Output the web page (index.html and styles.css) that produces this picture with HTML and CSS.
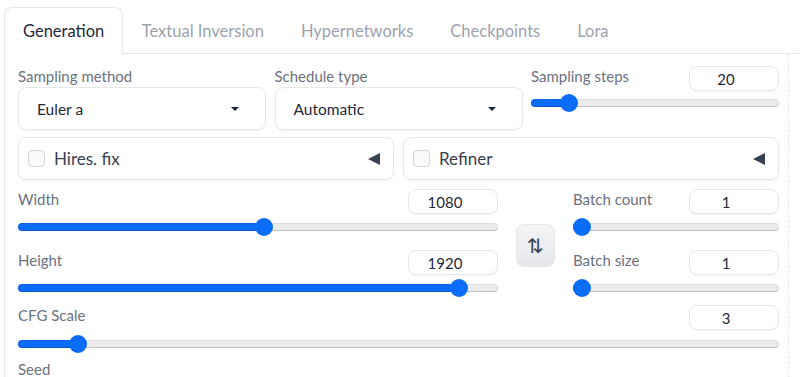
FILE: index.html
```html
<!DOCTYPE html>
<html>
<head>
<meta charset="utf-8">
<link rel="stylesheet" href="styles.css">
</head>
<body>
<div class="app">
  <div class="tabs">
    <button class="tab active">Generation</button>
    <button class="tab">Textual Inversion</button>
    <button class="tab">Hypernetworks</button>
    <button class="tab">Checkpoints</button>
    <button class="tab">Lora</button>
  </div>
  <div class="panel">
    <div class="content">
      <div class="row-top">
        <div class="field">
          <div class="lbl">Sampling method</div>
          <div class="select"><span class="select-val">Euler a</span><span class="caret"></span></div>
        </div>
        <div class="field">
          <div class="lbl">Schedule type</div>
          <div class="select"><span class="select-val">Automatic</span><span class="caret"></span></div>
        </div>
        <div class="slider-field steps">
          <div class="slider-head"><span class="lbl">Sampling steps</span><input class="num" type="text" value="20"></div>
          <input class="range" type="range" min="1" max="150" value="20" style="--f:0.1275">
        </div>
      </div>
      <div class="row-acc">
        <div class="accordion"><span class="cb"></span><span class="acc-title">Hires. fix</span><span class="tri"></span></div>
        <div class="accordion"><span class="cb"></span><span class="acc-title">Refiner</span><span class="tri"></span></div>
      </div>
      <div class="row-dims">
        <div class="col-left">
          <div class="slider-field">
            <div class="slider-head"><span class="lbl">Width</span><input class="num" type="text" value="1080"></div>
            <input class="range" type="range" min="64" max="2048" value="1080" style="--f:0.5121">
          </div>
          <div class="slider-field gap">
            <div class="slider-head"><span class="lbl">Height</span><input class="num" type="text" value="1920"></div>
            <input class="range" type="range" min="64" max="2048" value="1920" style="--f:0.9355">
          </div>
        </div>
        <button class="swap">⇅</button>
        <div class="col-right">
          <div class="slider-field">
            <div class="slider-head"><span class="lbl">Batch count</span><input class="num" type="text" value="1"></div>
            <input class="range" type="range" min="1" max="100" value="1" style="--f:0">
          </div>
          <div class="slider-field gap">
            <div class="slider-head"><span class="lbl">Batch size</span><input class="num" type="text" value="1"></div>
            <input class="range" type="range" min="1" max="8" value="1" style="--f:0">
          </div>
        </div>
      </div>
      <div class="slider-field cfg">
        <div class="slider-head"><span class="lbl">CFG Scale</span><input class="num" type="text" value="3"></div>
        <input class="range" type="range" min="1" max="30" value="3" style="--f:0.069">
      </div>
      <div class="lbl seed">Seed</div>
    </div>
    <div class="divider"></div>
  </div>
</div>
</body>
</html>
```

FILE: styles.css
```css
* { box-sizing: border-box; margin: 0; padding: 0; }
html, body { background: #ffffff; }
body {
  font-family: "Lato", "Noto Sans", sans-serif;
  color: #1f2937;
  width: 800px;
  height: 377px;
  overflow: hidden;
}
.app { padding: 7px 0 0 4px; }

.tabs {
  display: flex;
  height: 47px;
  border-bottom: 1px solid #e5e7eb;
}
.tab {
  font-family: inherit;
  font-size: 16.5px;
  color: #9ca3af;
  background: transparent;
  border: 1px solid transparent;
  border-bottom: none;
  padding: 0 17.5px;
  height: 46px;
  cursor: pointer;
}
.tab.active {
  color: #1f2937;
  background: #fff;
  border-color: #e5e7eb;
  border-radius: 8px 8px 0 0;
  height: 47px;
  padding: 0 18px;
  border-bottom: 1px solid #fff;
}

.panel {
  display: flex;
  border-left: 1px solid #e5e7eb;
  height: 330px;
  padding: 12px 0 0 13px;
}
.content { width: 761px; flex: 0 0 761px; }
.divider {
  margin-left: 9px;
  margin-top: -12px;
  border-left: 1px dashed #e5e7eb;
}

.lbl {
  font-size: 15px;
  color: #6b7280;
  line-height: 20px;
}

.row-top {
  display: grid;
  grid-template-columns: 248px 248px 248px;
  column-gap: 8.5px;
  height: 64px;
}
.field .lbl { margin-bottom: 1px; }
.select {
  height: 43px;
  border: 1px solid #e5e7eb;
  border-radius: 8px;
  box-shadow: 0 1px 2px rgba(0, 0, 0, 0.05);
  display: flex;
  align-items: center;
  justify-content: space-between;
  padding: 0 26px 0 18px;
}
.select-val { font-size: 15.5px; color: #1f2937; }
.caret {
  width: 0;
  height: 0;
  border-left: 4px solid transparent;
  border-right: 4px solid transparent;
  border-top: 4.5px solid #1f2937;
}

.slider-head {
  display: flex;
  justify-content: space-between;
  align-items: flex-start;
  height: 25px;
}
.num {
  width: 90px;
  height: 25px;
  border: 1px solid #e5e7eb;
  border-radius: 8px;
  box-shadow: 0 1px 2px rgba(0, 0, 0, 0.04);
  font-family: inherit;
  font-size: 15px;
  color: #1f2937;
  text-align: center;
  padding: 0 16px 0 0;
  background: #fff;
  outline: none;
}
.range {
  -webkit-appearance: none;
  appearance: none;
  display: block;
  width: 100%;
  height: 18px;
  margin-top: 4px;
  background: transparent;
}
.range::-webkit-slider-runnable-track {
  height: 8px;
  border-radius: 4px;
  background: linear-gradient(to right, #0b6cf7 0, #0b6cf7 calc(9px + var(--f) * (100% - 18px)), #ececee calc(9px + var(--f) * (100% - 18px)));
  box-shadow: inset 0 -1px 0 rgba(0, 0, 0, 0.12), inset 0 0 0 1px rgba(0, 0, 0, 0.06);
}
.range::-webkit-slider-thumb {
  -webkit-appearance: none;
  width: 18px;
  height: 18px;
  border-radius: 50%;
  background: #0b6cf7;
  margin-top: -5px;
  border: none;
}
.steps .range { margin-top: 3px; }

.row-acc {
  display: grid;
  grid-template-columns: 376px 376px;
  column-gap: 9px;
  margin-top: 7px;
}
.accordion {
  height: 43px;
  border: 1px solid #e5e7eb;
  border-radius: 8px;
  box-shadow: 0 1px 2px rgba(0, 0, 0, 0.05);
  display: flex;
  align-items: center;
  padding: 0 13px 0 9px;
}
.cb {
  width: 17px;
  height: 17px;
  border: 1px solid #d1d5db;
  border-radius: 4px;
  background: #f9fafb;
  margin-right: 9px;
}
.acc-title {
  font-size: 17px;
  color: #374151;
  flex: 1;
}
.tri {
  width: 0;
  height: 0;
  border-top: 6.5px solid transparent;
  border-bottom: 6.5px solid transparent;
  border-right: 12px solid #374151;
}

.row-dims {
  display: flex;
  margin-top: 9px;
}
.col-left { width: 480px; }
.col-right { width: 206px; }
.slider-field.gap { margin-top: 14px; }
.swap {
  width: 39px;
  height: 43px;
  margin: 35px 18px 0;
  border: 1px solid #e5e7eb;
  border-radius: 8px;
  background: linear-gradient(to bottom, #f3f4f6, #e5e7eb);
  font-family: "DejaVu Sans", sans-serif;
  font-size: 20px;
  line-height: 1;
  color: #374151;
  align-self: flex-start;
}

.cfg { margin-top: 8px; }
.cfg .range { margin-top: 5px; }
.seed { margin-top: 6px; }
```
